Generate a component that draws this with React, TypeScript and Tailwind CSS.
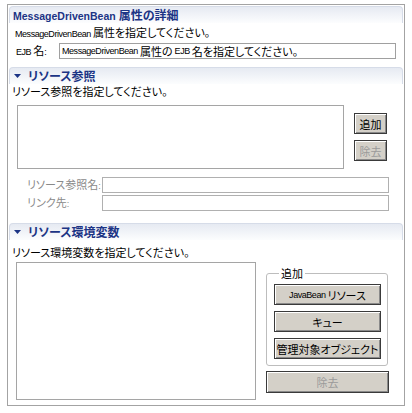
import React from "react";

const cjk = "font-['Noto_Sans_CJK_JP',sans-serif] [font-feature-settings:'palt']";

function L({ children }: { children: React.ReactNode }) {
  return (
    <span className="font-['Liberation_Sans',sans-serif] text-[9px] tracking-[-0.45px]">{children}</span>
  );
}

function Tri() {
  return (
    <svg width="7" height="4" viewBox="0 0 7 4" className="shrink-0">
      <path d="M0 0H7L3.5 4Z" fill="#1c3485" />
    </svg>
  );
}

function Header({ children, tri }: { children: React.ReactNode; tri?: boolean }) {
  return (
    <div className="h-[17px] flex items-center pl-[4px] rounded-t-[4px] border-t border-x border-[#d6dce8] bg-gradient-to-b from-[#e6eaf2] to-[#fcfdfe] shrink-0">
      {tri && <Tri />}
      <span className={`${tri ? "ml-[7px]" : "-ml-[1px]"} text-[#1c3485] font-bold leading-[12px] ${cjk} text-[12px] whitespace-nowrap`}>
        {children}
      </span>
    </div>
  );
}

function Btn({ children, disabled, className }: { children: React.ReactNode; disabled?: boolean; className?: string }) {
  return (
    <div
      className={`flex items-center justify-center border border-[#3a3a3a] bg-[#d4d0c8] shadow-[inset_1px_1px_0_#ffffff,inset_-1px_-1px_0_#8a8a8a] text-[11px] leading-[12px] whitespace-nowrap ${cjk} ${
        disabled ? "text-[#9a9a9a]" : "text-black"
      } ${className ?? ""}`}
    >
      {children}
    </div>
  );
}

export default function App() {
  return (
    <div className={`w-[412px] h-[413px] bg-white overflow-hidden ${cjk} text-[11px] leading-[12px] text-black`}>
      <div className="ml-[7px] mt-[4px] w-[398px] h-[402px] border border-[#a3a3a3] px-px pt-px flex flex-col">
        {/* Section 1 */}
        <Header>
          <span className="font-['Liberation_Sans',sans-serif] text-[10.5px]">MessageDrivenBean&nbsp;</span>属性の詳細
        </Header>
        <div className="mt-[3px] h-[12px] pl-[6px] whitespace-nowrap">
          <L>MessageDrivenBean&nbsp;</L>属性を指定してください。
        </div>
        <div className="mt-[5px] flex items-center h-[16px]">
          <div className="w-[50px] pl-[7px] whitespace-nowrap">
            <L>EJB&nbsp;</L>名<L>:</L>
          </div>
          <div className="flex-1 mr-[7px] h-[16px] border border-[#a0a0a0] flex items-center pl-[2px] whitespace-nowrap overflow-hidden">
            <L>MessageDrivenBean&nbsp;</L>属性の<L>&nbsp;EJB&nbsp;</L>名を指定してください。
          </div>
        </div>

        {/* Section 2 */}
        <div className="mt-[8px]">
          <Header tri>リソース参照</Header>
        </div>
        <div className="mt-[1px] h-[12px] pl-[3px] whitespace-nowrap">リソース参照を指定してください。</div>
        <div className="mt-[8px] flex items-start">
          <div className="ml-[8px] w-[327px] h-[64px] border border-[#a5a5a5] bg-white" />
          <div className="ml-[10px] pt-[8px] flex flex-col gap-[6px]">
            <Btn className="w-[33px] h-[21px]">追加</Btn>
            <Btn disabled className="w-[33px] h-[21px]">除去</Btn>
          </div>
        </div>
        <div className="mt-[8px] flex items-center h-[16px]">
          <div className="w-[93px] pl-[18px] text-[#8a8a8a] whitespace-nowrap">
            リソース参照名<L>:</L>
          </div>
          <div className="flex-1 mr-[14px] h-[16px] border border-[#b0b0b0]" />
        </div>
        <div className="mt-[2px] flex items-center h-[16px]">
          <div className="w-[93px] pl-[18px] text-[#8a8a8a] whitespace-nowrap">
            リンク先<L>:</L>
          </div>
          <div className="flex-1 mr-[14px] h-[16px] border border-[#b0b0b0]" />
        </div>

        {/* Section 3 */}
        <div className="mt-[12px]">
          <Header tri>リソース環境変数</Header>
        </div>
        <div className="mt-[6px] h-[12px] pl-[3px] whitespace-nowrap">リソース環境変数を指定してください。</div>
        <div className="mt-[4px] flex items-start">
          <div className="ml-[7px] w-[240px] h-[138px] border border-[#a5a5a5] bg-white" />
          <div className="ml-[10px] mt-[5px] flex flex-col">
            <fieldset className="w-[122px] border border-[#bdbdbd] rounded-[3px] pl-[7px] pt-[5px] pb-[6px] flex flex-col gap-[6px]">
              <legend className="ml-[5px] px-[2px] leading-[12px]">追加</legend>
              <Btn className="w-[107px] h-[21px]">
                <L>JavaBean&nbsp;</L>リソース
              </Btn>
              <Btn className="w-[107px] h-[21px]">キュー</Btn>
              <Btn className="w-[107px] h-[21px]">管理対象オブジェクト</Btn>
            </fieldset>
            <Btn disabled className="mt-[5px] w-[123px] h-[22px]">除去</Btn>
          </div>
        </div>
      </div>
    </div>
  );
}
